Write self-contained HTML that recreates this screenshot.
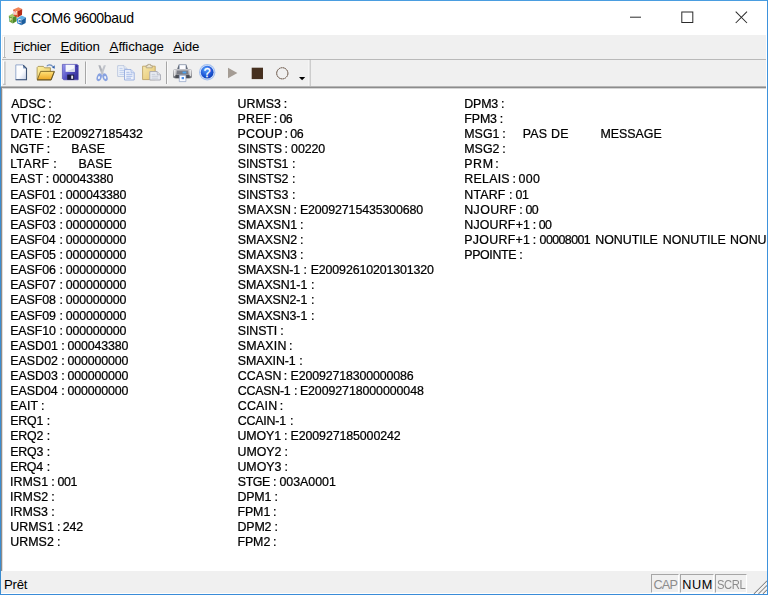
<!DOCTYPE html>
<html><head><meta charset="utf-8">
<style>
html,body{margin:0;padding:0;}
body{width:768px;height:595px;overflow:hidden;position:relative;background:#fff;font-family:"Liberation Sans",sans-serif;}
#win{position:absolute;left:0;top:0;width:768px;height:595px;background:#fff;overflow:hidden;}
.bd{position:absolute;background:#3f8fdc;}
#title{position:absolute;left:1px;top:1px;width:766px;height:34px;background:#fff;}
#title .txt{position:absolute;left:30.100px;top:8.500px;font-size:14.1px;letter-spacing:-.36px;color:#000;white-space:nowrap;}
#menu{position:absolute;left:2px;top:35px;width:764px;height:24px;background:#f0f0f0;}
#menu span{position:absolute;top:4.3px;font-size:13.3px;letter-spacing:-.18px;color:#000;white-space:nowrap;}
#tool{position:absolute;left:2px;top:59px;width:764px;height:28px;background:#f0f0f0;border-top:1px solid #b9b9b9;box-sizing:border-box;}
#client{position:absolute;left:2px;top:88px;width:764px;height:483px;overflow:hidden;background:#fff;filter:grayscale(1);}
.ln{position:absolute;}
#client span{position:absolute;font-size:12.4px;line-height:15.14px;color:#000;white-space:pre;-webkit-text-stroke:0.24px #000;}
#status{position:absolute;left:1px;top:571px;width:765.500px;height:22.400px;background:#f0f0f0;}
#status .txt{position:absolute;left:2.900px;top:5.800px;font-size:13.2px;letter-spacing:-.2px;}
.pn{position:absolute;top:3px;height:19px;box-sizing:border-box;border-top:1px solid #a6a6a6;border-left:1px solid #a6a6a6;border-right:1px solid #fff;border-bottom:1px solid #fff;font-size:12.7px;letter-spacing:-.5px;color:#8c8c8c;white-space:nowrap;line-height:1;}
.pn span{position:absolute;top:3.600px;}
</style>
</head><body>
<div id="win">
<div class="bd" style="left:0;top:0;width:768px;height:1px;background:#4a9de0"></div><div class="bd" style="left:0;top:0;width:1px;height:87px;background:#4a9de0"></div><div class="bd" style="left:0;top:87px;width:1px;height:508px;background:#3a8cd0"></div><div class="bd" style="left:767px;top:0;width:1px;height:595px;background:#3e92dc"></div><div class="bd" style="left:0;top:594px;width:768px;height:1px;background:#3a8cd8"></div>
<div id="title"><svg width="22" height="22" viewBox="7 5 22 22" style="position:absolute;left:6px;top:4px">
<polygon points="8.8,15.8 12.8,13.4 16.6,15.2 12.6,17.6" fill="#a6cc6a"/>
<polygon points="8.8,15.8 12.6,17.6 12.8,23.5 9.2,21.600" fill="#6ea23c"/>
<polygon points="12.6,17.6 16.6,15.2 16.6,21.2 12.8,23.5" fill="#4e8a2a"/>
<polygon points="16.8,18.4 21.6,15.6 26,17.6 21.2,20.4" fill="#62b0e6"/>
<polygon points="16.8,18.4 21.2,20.4 21.4,25.2 17.2,23.200" fill="#2c7cc4"/>
<polygon points="21.2,20.4 26,17.6 25.6,23 21.4,25.2" fill="#1c5e9e"/>
<polygon points="13.2,9.6 18.4,7.2 22.2,9.0 17.2,11.6" fill="#f28456"/>
<polygon points="13.2,9.6 17.2,11.6 17.6,17.6 13.6,15.4" fill="#e24c2a"/>
<polygon points="17.2,11.6 22.2,9.0 22.0,14.8 17.600,17.6" fill="#b62c18"/>
<text x="15.300" y="15.200" font-family="Liberation Sans, sans-serif" font-weight="bold" font-size="4.800" fill="#fff" text-anchor="middle">M</text>
<text x="10.800" y="21.400" font-family="Liberation Sans, sans-serif" font-weight="bold" font-size="4.200" fill="#e8f4d8" text-anchor="middle">F</text>
<text x="19.200" y="23.300" font-family="Liberation Sans, sans-serif" font-weight="bold" font-size="4.600" fill="#fff" text-anchor="middle">C</text>
</svg><span class="txt">COM6 9600baud</span><svg width="140" height="30" viewBox="620 2 140 30" style="position:absolute;left:619px;top:1px">
<path d="M630 17.200 H641" stroke="#2b2b2b" stroke-width="1" fill="none"/>
<rect x="681.800" y="12" width="11" height="10.500" fill="none" stroke="#2b2b2b" stroke-width="1"/>
<path d="M735.700 11.700 L747 23 M747 11.700 L735.700 23" stroke="#2b2b2b" stroke-width="1.050" fill="none"/>
</svg></div>
<div id="menu"><div class="ln" style="left:1px;top:1px;width:1.2px;height:21.5px;background:#fff"></div><div class="ln" style="left:2.3px;top:1.5px;width:1.2px;height:21px;background:#b9b9b9"></div><div class="ln" style="left:1px;top:21.600px;width:2.500px;height:1px;background:#b9b9b9"></div><span style="left:11.3px;letter-spacing:-.4px"><u>F</u>ichier</span><span style="left:58.4px"><u>E</u>dition</span><span style="left:107.6px;letter-spacing:-.1px"><u>A</u>ffichage</span><span style="left:171.200px"><u>A</u>ide</span></div>
<div id="tool"><svg id="tb" width="765" height="30" viewBox="2 58 765 30" style="position:absolute;left:0;top:-2px">
<defs>
<linearGradient id="gdoc" x1="0" y1="0" x2="1" y2="1"><stop offset="0" stop-color="#ffffff"/><stop offset=".55" stop-color="#fbfcff"/><stop offset="1" stop-color="#c4cfe6"/></linearGradient>
<linearGradient id="gfold" x1="0" y1="0" x2="0" y2="1"><stop offset="0" stop-color="#ffe27a"/><stop offset="1" stop-color="#eda622"/></linearGradient>
<linearGradient id="gsave" x1="0" y1="0" x2="1" y2=".6"><stop offset="0" stop-color="#9a9af0"/><stop offset=".5" stop-color="#5a58c8"/><stop offset="1" stop-color="#38329e"/></linearGradient>
<radialGradient id="ghelp" cx=".4" cy=".3" r=".8"><stop offset="0" stop-color="#5aa0ff"/><stop offset=".6" stop-color="#1c56d6"/><stop offset="1" stop-color="#0c3aa8"/></radialGradient>
<linearGradient id="gprn" x1="0" y1="0" x2="0" y2="1"><stop offset="0" stop-color="#c8c8cc"/><stop offset="1" stop-color="#6e7076"/></linearGradient>
<linearGradient id="gfd" x1="0" y1="1" x2="1" y2="0"><stop offset="0" stop-color="#9ab0d4"/><stop offset="1" stop-color="#2c4874"/></linearGradient><linearGradient id="gfb" x1="0" y1="0" x2="1" y2="1"><stop offset="0" stop-color="#fff2a4"/><stop offset="1" stop-color="#e8c45c"/></linearGradient>
<linearGradient id="gclip" x1="0" y1="0" x2="1" y2="1"><stop offset="0" stop-color="#f8e8a8"/><stop offset="1" stop-color="#e4c060"/></linearGradient>
</defs>
<!-- grippers / edges -->
<rect x="3" y="61" width="1.2" height="23.6" fill="#ffffff"/><rect x="4.300" y="61.500" width="1.200" height="23.300" fill="#b9b9b9"/><rect x="3" y="83.800" width="2.500" height="1" fill="#b9b9b9"/>
<rect x="85" y="61.5" width="1" height="22.5" fill="#a6a6a6"/><rect x="86" y="61.5" width="1" height="22.5" fill="#fafafa"/>
<rect x="166" y="61.5" width="1" height="22.5" fill="#a6a6a6"/><rect x="167" y="61.5" width="1" height="22.5" fill="#fafafa"/>
<rect x="309.500" y="59.5" width="1" height="27" fill="#a9a9a9"/><rect x="308.500" y="60" width="1" height="26" fill="#fafafa"/>
<!-- new -->
<path d="M15.800 64.900 H23 L26.500 68.400 V79.600 H15.800 Z" fill="url(#gdoc)" stroke="#7f98c4" stroke-width=".8"/>
<path d="M23 64.900 L26.500 68.400 H23 Z" fill="url(#gfd)"/>
<path d="M23.200 65.100 L26.500 68.400 V79.800 H15.600" fill="none" stroke="#3c5274" stroke-width="1.100"/>
<!-- open -->
<path d="M37.100 79.400 V67.600 L38.100 66.400 H43.400 L44.600 67.800 H50.400 V79.400 Z" fill="url(#gfb)" stroke="#a08a48" stroke-width=".8"/>
<path d="M37.300 79.800 L40.600 71.400 H54.300 L51 79.800 Z" fill="url(#gfold)" stroke="#7a6424" stroke-width=".9"/>
<path d="M37 80 H51.200 L54.400 71.600" fill="none" stroke="#5c4a1c" stroke-width=".9" opacity=".8"/>
<path d="M46.800 66.300 C48 64.300 51.400 64.300 52.900 66.800" fill="none" stroke="#6c8cbc" stroke-width="1.100"/>
<path d="M52 67.400 L54.700 65.200 L54.700 68.800 Z" fill="#2c5ca8"/>
<!-- save -->
<path d="M62.4 64.4 H77.2 L78.2 65.4 V79.8 H63.6 L62.4 78.6 Z" fill="url(#gsave)" stroke="#3e3aa8" stroke-width=".6"/>
<rect x="65.6" y="64.8" width="9.2" height="7" fill="#f4f6fc"/>
<path d="M65.6 71.8 H74.8 V68 Z" fill="#d4d8ea"/>
<rect x="67.200" y="74.600" width="7" height="5.200" fill="#1c1c44"/>
<rect x="71.200" y="75.600" width="1.900" height="3.200" fill="#e8e8f0"/>
<rect x="76.2" y="65.6" width="1" height="1.2" fill="#2a2880"/>
<!-- cut (disabled) -->
<g opacity=".9">
<ellipse cx="99.200" cy="77.300" rx="2.500" ry="4" transform="rotate(18 99.200 77.300)" fill="#7d9adf"/>
<ellipse cx="105" cy="77.200" rx="2.500" ry="4" transform="rotate(-18 105 77.200)" fill="#7d9adf"/>
<ellipse cx="99" cy="77.600" rx=".95" ry="1.500" transform="rotate(18 99 77.600)" fill="#f6f8fd"/>
<ellipse cx="105.200" cy="77.400" rx=".95" ry="1.500" transform="rotate(-18 105.200 77.400)" fill="#f6f8fd"/>
<path d="M98.300 65.200 L100.400 65.200 L103.600 73.600 L101.600 74.400 Z" fill="#a9acb4"/>
<path d="M105.900 65.200 L103.800 65.200 L100.600 73.600 L102.600 74.400 Z" fill="#bcc0c8"/>
</g>
<!-- copy (disabled) -->
<g opacity=".9">
<path d="M117.700 65.700 H124 L127 68.700 V76.400 H117.700 Z" fill="#f1f5fc" stroke="#a9b9d8" stroke-width=".8"/>
<path d="M124 65.700 V68.700 H127" fill="#dfe7f6" stroke="#a9b9d8" stroke-width=".6"/>
<path d="M119.400 68.300 H122.600 M119.400 70.300 H125.200 M119.400 72.300 H125.200 M119.400 74.300 H124" stroke="#9db6e4" stroke-width=".75"/>
<path d="M124.500 69.600 H131 L134.200 72.800 V80 H124.500 Z" fill="#eef3fd" stroke="#8aa4dc" stroke-width=".9"/>
<path d="M131 69.600 V72.800 H134.200" fill="#d5e0f6" stroke="#8aa4dc" stroke-width=".6"/>
<path d="M126.300 72.300 H129.600 M126.300 74.300 H132.400 M126.300 76.300 H132.400 M126.300 78.200 H131" stroke="#86a4e0" stroke-width=".75"/>
</g>
<!-- paste (disabled) -->
<g opacity=".9">
<path d="M142.600 66.200 H155.200 V79.600 H142.600 Z" fill="url(#gclip)" stroke="#b89c58" stroke-width=".9"/>
<path d="M146.200 67.800 V65.600 H147.800 V64.400 H150.600 V65.600 H152.200 V67.800 Z" fill="#ece6d0" stroke="#9c8c68" stroke-width=".7"/>
<path d="M149.800 71.600 H157.200 L160.400 74.800 V80 H149.800 Z" fill="#eceff6" stroke="#9a9ca8" stroke-width=".9"/>
<path d="M157.200 71.600 V74.800 H160.400" fill="#d8dce6" stroke="#9a9ca8" stroke-width=".6"/>
<path d="M151.600 74.300 H155.400 M151.600 76.200 H158.400 M151.600 78.100 H158.400" stroke="#b0b8c8" stroke-width=".75"/>
</g>
<!-- print -->
<path d="M177 69.600 L178.800 64.400 H186.300 L188 69.600 Z" fill="#5e6470"/>
<path d="M179.300 69.800 V64.800 H185.900 V69.800 Z" fill="#fdfdff" stroke="#8ea0c0" stroke-width=".5"/>
<path d="M175 69 H190 C191.200 69 191.900 69.800 191.900 71 V76.600 C191.900 77.600 191.300 78.200 190.300 78.200 H174.700 C173.700 78.200 173.100 77.600 173.100 76.600 V71 C173.100 69.800 173.800 69 175 69 Z" fill="url(#gprn)"/>
<rect x="174" y="70" width="1.600" height="6" fill="#fff" opacity=".7"/><rect x="189.400" y="70" width="1.600" height="6" fill="#fff" opacity=".7"/>
<rect x="177" y="70.600" width="11" height="3.400" fill="#6a6e78" opacity=".75"/>
<rect x="182.600" y="71.600" width="3.600" height="1.800" fill="#4aa4f4"/>
<path d="M175.400 75 H189.600 V78.200 H175.400 Z" fill="#3c4048" opacity=".8"/>
<path d="M179.300 75.200 H185.900 V81.600 H179.300 Z" fill="#f8faff" stroke="#7e94bc" stroke-width=".6"/>
<rect x="181.600" y="77" width="2.400" height="2.200" fill="#4a8ee6"/>
<!-- help -->
<circle cx="207.200" cy="72.200" r="8.200" fill="#a3c0f0"/>
<circle cx="207.200" cy="72.200" r="7" fill="#e4edfc"/>
<circle cx="207.200" cy="72.200" r="6.400" fill="url(#ghelp)"/>
<text x="207.200" y="76.700" font-family="Liberation Sans, sans-serif" font-size="12.200" fill="#ffffff" text-anchor="middle" stroke="#fff" stroke-width=".3">?</text>
<!-- play -->
<path d="M228 67.800 L237.400 73 L228 78.300 Z" fill="#a49c94"/>
<!-- stop -->
<rect x="251.700" y="67.700" width="11.300" height="11.400" fill="#46301f"/>
<!-- record -->
<circle cx="282.300" cy="73.300" r="5.600" fill="none" stroke="#5c4636" stroke-width="1" stroke-dasharray="1.8 .4"/>
<!-- chevron -->
<path d="M299 77 H305.200 L302.100 80.300 Z" fill="#000"/>
</svg></div>
<div id="client">
<span style="left:9.18px;top:8.85px;letter-spacing:0.065px">ADSC</span>
<span style="left:46.18px;top:8.85px">:</span>
<span style="left:9.15px;top:23.97px;letter-spacing:0.461px">VTIC</span>
<span style="left:40.38px;top:23.97px">:</span>
<span style="left:45.92px;top:23.97px;letter-spacing:-0.085px">02</span>
<span style="left:8.18px;top:39.09px;letter-spacing:0.026px">DATE</span>
<span style="left:44.18px;top:39.09px">:</span>
<span style="left:50.38px;top:39.09px;letter-spacing:-0.032px">E200927185432</span>
<span style="left:8.18px;top:54.21px;letter-spacing:-0.045px">NGTF</span>
<span style="left:44.68px;top:54.21px">:</span>
<span style="left:69.28px;top:54.21px;letter-spacing:0.256px">BASE</span>
<span style="left:8.18px;top:69.33px;letter-spacing:0.361px">LTARF</span>
<span style="left:51.18px;top:69.33px">:</span>
<span style="left:76.38px;top:69.33px;letter-spacing:0.222px">BASE</span>
<span style="left:8.18px;top:84.45px;letter-spacing:0.172px">EAST</span>
<span style="left:43.68px;top:84.45px">:</span>
<span style="left:50.42px;top:84.45px;letter-spacing:-0.137px">000043380</span>
<span style="left:8.18px;top:99.57px;letter-spacing:-0.071px">EASF01</span>
<span style="left:57.48px;top:99.57px">:</span>
<span style="left:63.82px;top:99.57px;letter-spacing:-0.175px">000043380</span>
<span style="left:8.18px;top:114.69px;letter-spacing:-0.068px">EASF02</span>
<span style="left:57.48px;top:114.69px">:</span>
<span style="left:63.82px;top:114.69px;letter-spacing:-0.175px">000000000</span>
<span style="left:8.18px;top:129.81px;letter-spacing:-0.083px">EASF03</span>
<span style="left:57.48px;top:129.81px">:</span>
<span style="left:63.82px;top:129.81px;letter-spacing:-0.175px">000000000</span>
<span style="left:8.18px;top:144.93px;letter-spacing:-0.120px">EASF04</span>
<span style="left:57.48px;top:144.93px">:</span>
<span style="left:63.82px;top:144.93px;letter-spacing:-0.175px">000000000</span>
<span style="left:8.18px;top:160.05px;letter-spacing:-0.088px">EASF05</span>
<span style="left:57.48px;top:160.05px">:</span>
<span style="left:63.82px;top:160.05px;letter-spacing:-0.175px">000000000</span>
<span style="left:8.18px;top:175.17px;letter-spacing:-0.083px">EASF06</span>
<span style="left:57.48px;top:175.17px">:</span>
<span style="left:63.82px;top:175.17px;letter-spacing:-0.175px">000000000</span>
<span style="left:8.18px;top:190.29px;letter-spacing:-0.068px">EASF07</span>
<span style="left:57.48px;top:190.29px">:</span>
<span style="left:63.82px;top:190.29px;letter-spacing:-0.175px">000000000</span>
<span style="left:8.18px;top:205.41px;letter-spacing:-0.085px">EASF08</span>
<span style="left:57.48px;top:205.41px">:</span>
<span style="left:63.82px;top:205.41px;letter-spacing:-0.175px">000000000</span>
<span style="left:8.18px;top:220.53px;letter-spacing:-0.075px">EASF09</span>
<span style="left:57.48px;top:220.53px">:</span>
<span style="left:63.82px;top:220.53px;letter-spacing:-0.175px">000000000</span>
<span style="left:8.18px;top:235.65px;letter-spacing:-0.096px">EASF10</span>
<span style="left:57.48px;top:235.65px">:</span>
<span style="left:63.82px;top:235.65px;letter-spacing:-0.175px">000000000</span>
<span style="left:8.18px;top:250.77px;letter-spacing:0.053px">EASD01</span>
<span style="left:59.28px;top:250.77px">:</span>
<span style="left:65.52px;top:250.77px;letter-spacing:-0.137px">000043380</span>
<span style="left:8.18px;top:265.89px;letter-spacing:0.056px">EASD02</span>
<span style="left:59.28px;top:265.89px">:</span>
<span style="left:65.52px;top:265.89px;letter-spacing:-0.137px">000000000</span>
<span style="left:8.18px;top:281.01px;letter-spacing:0.041px">EASD03</span>
<span style="left:59.28px;top:281.01px">:</span>
<span style="left:65.52px;top:281.01px;letter-spacing:-0.137px">000000000</span>
<span style="left:8.18px;top:296.13px">EASD04</span>
<span style="left:59.28px;top:296.13px">:</span>
<span style="left:65.52px;top:296.13px;letter-spacing:-0.137px">000000000</span>
<span style="left:8.18px;top:311.25px;letter-spacing:0.114px">EAIT</span>
<span style="left:39.08px;top:311.25px">:</span>
<span style="left:8.18px;top:326.37px;letter-spacing:-0.181px">ERQ1</span>
<span style="left:44.68px;top:326.37px">:</span>
<span style="left:8.18px;top:341.49px;letter-spacing:-0.175px">ERQ2</span>
<span style="left:44.68px;top:341.49px">:</span>
<span style="left:8.18px;top:356.61px;letter-spacing:-0.202px">ERQ3</span>
<span style="left:44.68px;top:356.61px">:</span>
<span style="left:8.18px;top:371.73px;letter-spacing:-0.262px">ERQ4</span>
<span style="left:44.68px;top:371.73px">:</span>
<span style="left:8.06px;top:386.85px;letter-spacing:0.038px">IRMS1</span>
<span style="left:49.28px;top:386.85px">:</span>
<span style="left:55.52px;top:386.85px;letter-spacing:-0.425px">001</span>
<span style="left:8.06px;top:401.97px;letter-spacing:0.043px">IRMS2</span>
<span style="left:49.28px;top:401.97px">:</span>
<span style="left:8.06px;top:417.09px;letter-spacing:0.023px">IRMS3</span>
<span style="left:49.28px;top:417.09px">:</span>
<span style="left:8.24px;top:432.21px;letter-spacing:0.052px">URMS1</span>
<span style="left:55.03px;top:432.21px">:</span>
<span style="left:60.63px;top:432.21px;letter-spacing:-0.096px">242</span>
<span style="left:8.24px;top:447.33px;letter-spacing:0.056px">URMS2</span>
<span style="left:55.03px;top:447.33px">:</span>
<span style="left:235.44px;top:8.85px;letter-spacing:0.049px">URMS3</span>
<span style="left:281.78px;top:8.85px">:</span>
<span style="left:235.38px;top:23.97px;letter-spacing:0.314px">PREF</span>
<span style="left:271.78px;top:23.97px">:</span>
<span style="left:277.42px;top:23.97px;letter-spacing:-0.463px">06</span>
<span style="left:235.38px;top:39.09px;letter-spacing:0.294px">PCOUP</span>
<span style="left:282.58px;top:39.09px">:</span>
<span style="left:288.22px;top:39.09px;letter-spacing:-0.263px">06</span>
<span style="left:235.84px;top:54.21px;letter-spacing:-0.131px">SINSTS</span>
<span style="left:282.58px;top:54.21px">:</span>
<span style="left:289.12px;top:54.21px;letter-spacing:-0.078px">00220</span>
<span style="left:235.84px;top:69.33px;letter-spacing:-0.186px">SINSTS1</span>
<span style="left:289.88px;top:69.33px">:</span>
<span style="left:235.84px;top:84.45px;letter-spacing:-0.183px">SINSTS2</span>
<span style="left:289.88px;top:84.45px">:</span>
<span style="left:235.84px;top:99.57px;letter-spacing:-0.196px">SINSTS3</span>
<span style="left:289.88px;top:99.57px">:</span>
<span style="left:235.84px;top:114.69px;letter-spacing:0.181px">SMAXSN</span>
<span style="left:291.38px;top:114.69px">:</span>
<span style="left:297.88px;top:114.69px;letter-spacing:-0.124px">E20092715435300680</span>
<span style="left:235.84px;top:129.81px">SMAXSN1</span>
<span style="left:298.08px;top:129.81px">:</span>
<span style="left:235.84px;top:144.93px">SMAXSN2</span>
<span style="left:298.08px;top:144.93px">:</span>
<span style="left:235.84px;top:160.05px;letter-spacing:-0.009px">SMAXSN3</span>
<span style="left:298.08px;top:160.05px">:</span>
<span style="left:235.84px;top:175.17px;letter-spacing:-0.161px">SMAXSN-1</span>
<span style="left:301.58px;top:175.17px">:</span>
<span style="left:308.68px;top:175.17px;letter-spacing:-0.124px">E20092610201301320</span>
<span style="left:235.84px;top:190.29px;letter-spacing:-0.096px">SMAXSN1-1</span>
<span style="left:308.88px;top:190.29px">:</span>
<span style="left:235.84px;top:205.41px;letter-spacing:-0.096px">SMAXSN2-1</span>
<span style="left:308.88px;top:205.41px">:</span>
<span style="left:235.84px;top:220.53px;letter-spacing:-0.096px">SMAXSN3-1</span>
<span style="left:308.88px;top:220.53px">:</span>
<span style="left:235.84px;top:235.65px;letter-spacing:-0.111px">SINSTI</span>
<span style="left:278.28px;top:235.65px">:</span>
<span style="left:235.84px;top:250.77px;letter-spacing:0.227px">SMAXIN</span>
<span style="left:286.98px;top:250.77px">:</span>
<span style="left:235.84px;top:265.89px;letter-spacing:-0.100px">SMAXIN-1</span>
<span style="left:297.18px;top:265.89px">:</span>
<span style="left:235.77px;top:281.01px;letter-spacing:0.084px">CCASN</span>
<span style="left:281.78px;top:281.01px">:</span>
<span style="left:288.58px;top:281.01px;letter-spacing:-0.138px">E20092718300000086</span>
<span style="left:235.77px;top:296.13px;letter-spacing:-0.249px">CCASN-1</span>
<span style="left:291.98px;top:296.13px">:</span>
<span style="left:297.88px;top:296.13px;letter-spacing:-0.085px">E20092718000000048</span>
<span style="left:235.77px;top:311.25px;letter-spacing:0.190px">CCAIN</span>
<span style="left:277.68px;top:311.25px">:</span>
<span style="left:235.77px;top:326.37px;letter-spacing:-0.212px">CCAIN-1</span>
<span style="left:287.88px;top:326.37px">:</span>
<span style="left:235.44px;top:341.49px;letter-spacing:-0.109px">UMOY1</span>
<span style="left:282.08px;top:341.49px">:</span>
<span style="left:288.58px;top:341.49px;letter-spacing:-0.105px">E200927185000242</span>
<span style="left:235.44px;top:356.61px">UMOY2</span>
<span style="left:282.58px;top:356.61px">:</span>
<span style="left:235.44px;top:371.73px;letter-spacing:-0.024px">UMOY3</span>
<span style="left:282.58px;top:371.73px">:</span>
<span style="left:235.84px;top:386.85px;letter-spacing:-0.455px">STGE</span>
<span style="left:270.98px;top:386.85px">:</span>
<span style="left:277.42px;top:386.85px;letter-spacing:-0.008px">003A0001</span>
<span style="left:235.38px;top:401.97px;letter-spacing:-0.110px">DPM1</span>
<span style="left:272.38px;top:401.97px">:</span>
<span style="left:235.38px;top:417.09px;letter-spacing:-0.049px">FPM1</span>
<span style="left:270.98px;top:417.09px">:</span>
<span style="left:235.38px;top:432.21px;letter-spacing:-0.103px">DPM2</span>
<span style="left:272.38px;top:432.21px">:</span>
<span style="left:235.38px;top:447.33px;letter-spacing:-0.043px">FPM2</span>
<span style="left:270.98px;top:447.33px">:</span>
<span style="left:462.28px;top:8.85px;letter-spacing:-0.163px">DPM3</span>
<span style="left:498.98px;top:8.85px">:</span>
<span style="left:462.28px;top:23.97px;letter-spacing:-0.103px">FPM3</span>
<span style="left:497.78px;top:23.97px">:</span>
<span style="left:462.28px;top:39.09px;letter-spacing:0.027px">MSG1</span>
<span style="left:500.18px;top:39.09px">:</span>
<span style="left:520.78px;top:39.09px;letter-spacing:0.233px">PAS DE</span>
<span style="left:598.38px;top:39.09px">MESSAGE</span>
<span style="left:462.28px;top:54.21px;letter-spacing:0.033px">MSG2</span>
<span style="left:500.18px;top:54.21px">:</span>
<span style="left:462.28px;top:69.33px;letter-spacing:0.590px">PRM</span>
<span style="left:493.28px;top:69.33px">:</span>
<span style="left:462.28px;top:84.45px;letter-spacing:0.256px">RELAIS</span>
<span style="left:510.38px;top:84.45px">:</span>
<span style="left:516.52px;top:84.45px;letter-spacing:0.290px">000</span>
<span style="left:462.28px;top:99.57px;letter-spacing:0.171px">NTARF</span>
<span style="left:507.08px;top:99.57px">:</span>
<span style="left:513.62px;top:99.57px;letter-spacing:-0.503px">01</span>
<span style="left:462.28px;top:114.69px;letter-spacing:0.386px">NJOURF</span>
<span style="left:517.28px;top:114.69px">:</span>
<span style="left:523.42px;top:114.69px;letter-spacing:-0.600px">00</span>
<span style="left:462.28px;top:129.81px;letter-spacing:0.186px">NJOURF+1</span>
<span style="left:530.68px;top:129.81px">:</span>
<span style="left:536.82px;top:129.81px;letter-spacing:-0.600px">00</span>
<span style="left:462.28px;top:144.93px;letter-spacing:0.284px">PJOURF+1</span>
<span style="left:530.68px;top:144.93px">:</span>
<span style="left:537.62px;top:144.93px;letter-spacing:-0.583px">00008001</span>
<span style="left:593.18px;top:144.93px;letter-spacing:0.008px">NONUTILE</span>
<span style="left:660.68px;top:144.93px;letter-spacing:0.051px">NONUTILE</span>
<span style="left:727.98px;top:144.93px;letter-spacing:0.036px">NONUTILE</span>
<span style="left:795.48px;top:144.93px;letter-spacing:0.051px">NONUTILE</span>
<span style="left:462.28px;top:160.05px;letter-spacing:-0.364px">PPOINTE</span>
<span style="left:517.28px;top:160.05px">:</span>
</div>
<!--endclient-->
<div class="ln" style="left:1px;top:86px;width:765px;height:1px;background:#b6b6b6"></div><div class="ln" style="left:1px;top:87px;width:765px;height:1px;background:#8c8c8c"></div><div class="ln" style="left:1px;top:88px;width:765px;height:1px;background:#d6d6d6"></div><div class="ln" style="left:1px;top:87px;width:1px;height:484px;background:#8c8a89"></div><div class="ln" style="left:2px;top:88px;width:1px;height:483px;background:#dedede"></div>
<div id="status"><span class="txt">Prêt</span>
<div class="pn" style="left:650px;width:28px"><span style="left:1.400px;letter-spacing:-.8px">CAP</span></div>
<div class="pn" style="left:679px;width:34px;color:#000"><span style="left:1.300px;letter-spacing:.55px">NUM</span></div>
<div class="pn" style="left:714px;width:32px"><span style="left:.900px;letter-spacing:-.5px;transform:scaleX(.885);transform-origin:0 0">SCRL</span></div>
<svg width="15" height="15" viewBox="0 0 15 15" style="position:absolute;left:751px;top:8px"><path d="M2 15 L15 2 M6.500 15 L15 6.500 M11 15 L15 11" stroke="#8a8a8a" stroke-width="1.100" fill="none"/><path d="M3.200 15 L15 3.200 M7.700 15 L15 7.700 M12.200 15 L15 12.200" stroke="#ffffff" stroke-width=".8" fill="none"/></svg>
</div>
</div>
</body></html>
